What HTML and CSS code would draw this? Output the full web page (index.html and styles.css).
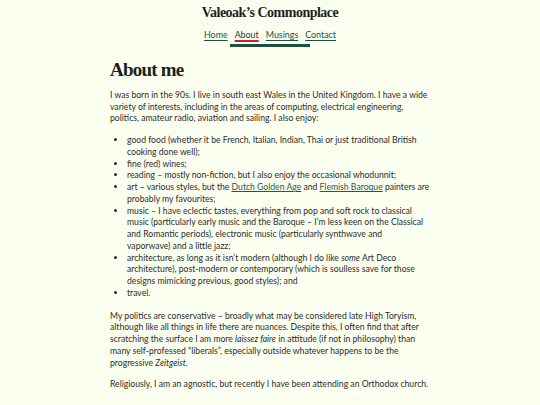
FILE: index.html
```html
<!DOCTYPE html>
<html lang="en">
<head>
<meta charset="utf-8">
<title>About me – Valeoak's Commonplace</title>
<link rel="stylesheet" href="styles.css">
</head>
<body>
<header class="site-header">
  <div class="site-title">Valeoak’s Commonplace</div>
  <nav class="site-nav">
    <a href="#">Home</a>
    <a href="#" class="active">About</a>
    <a href="#">Musings</a>
    <a href="#">Contact</a>
  </nav>
  <div class="nav-bar"></div>
</header>
<main class="content">
  <h1>About me</h1>
  <p>I was born in the 90s. I live in south east Wales in the United Kingdom. I have a wide variety of interests, including in the areas of computing, electrical engineering, politics, amateur radio, aviation and sailing. I also enjoy:</p>
  <ul>
    <li>good food (whether it be French, Italian, Indian, Thai or just traditional British cooking done well);</li>
    <li>fine (red) wines;</li>
    <li>reading – mostly non-fiction, but I also enjoy the occasional whodunnit;</li>
    <li>art – various styles, but the <a href="#">Dutch Golden Age</a> and <a href="#">Flemish Baroque</a> painters are probably my favourites;</li>
    <li>music – I have eclectic tastes, everything from pop and soft rock to classical music (particularly early music and the Baroque – I’m less keen on the Classical and Romantic periods), electronic music (particularly synthwave and <span class="nowrap">vaporwave) and a little jazz;</span></li>
    <li>architecture, as long as it isn’t modern (although I do like <em>some</em> Art Deco architecture), post-modern or contemporary (which is soulless save for those designs mimicking previous, good styles); and</li>
    <li>travel.</li>
  </ul>
  <p>My politics are conservative – broadly what may be considered late High Toryism, although like all things in life there are nuances. Despite this, I often find that after scratching the surface I am more <em>laissez faire</em> in attitude (if not in philosophy) than many self-professed “liberals”, especially outside whatever happens to be the progressive <em>Zeitgeist</em>.</p>
  <p>Religiously, I am an agnostic, but recently I have been attending an Orthodox <span class="nowrap">church.</span></p>
</main>
</body>
</html>
```
FILE: styles.css
```css
html, body {
  margin: 0;
  padding: 0;
  background: #fbfff0;
}
body {
  font-family: Lato, "Liberation Sans", sans-serif;
  font-size: 8.65px;
  line-height: 11.75px;
  color: #2b2b2b;
}
.site-header {
  display: flex;
  flex-direction: column;
  align-items: center;
  padding-top: 4px;
}
.site-title {
  font-family: "Liberation Serif", serif;
  font-weight: bold;
  font-size: 14px;
  line-height: 17px;
  color: #1e1e1e;
  letter-spacing: -0.5px;
}
.site-nav {
  display: flex;
  gap: 7px;
  margin-top: 8px;
  font-size: 8.9px;
}
.site-nav a {
  color: #1f4f40;
  text-decoration: underline;
  text-underline-offset: 2px;
  text-decoration-thickness: 1px;
}
.site-nav a.active {
  color: #1f3b33;
  text-decoration-color: #d0202a;
  text-decoration-thickness: 2px;
}
.nav-bar {
  width: 80px;
  height: 3px;
  background: #1f4f40;
  margin-top: 3px;
}
.content {
  width: 320px;
  margin: 0 auto;
}
h1 {
  font-family: "Liberation Serif", serif;
  font-weight: bold;
  font-size: 19px;
  line-height: 22px;
  letter-spacing: -0.8px;
  margin: 12px 0 8px;
  color: #1e1e1e;
}
p {
  margin: 0 0 10px;
}
ul {
  margin: 0 0 11px;
  padding-left: 17px;
}
.content a {
  color: #1f5a48;
  text-decoration: underline;
}
.nowrap {
  white-space: nowrap;
}
```
